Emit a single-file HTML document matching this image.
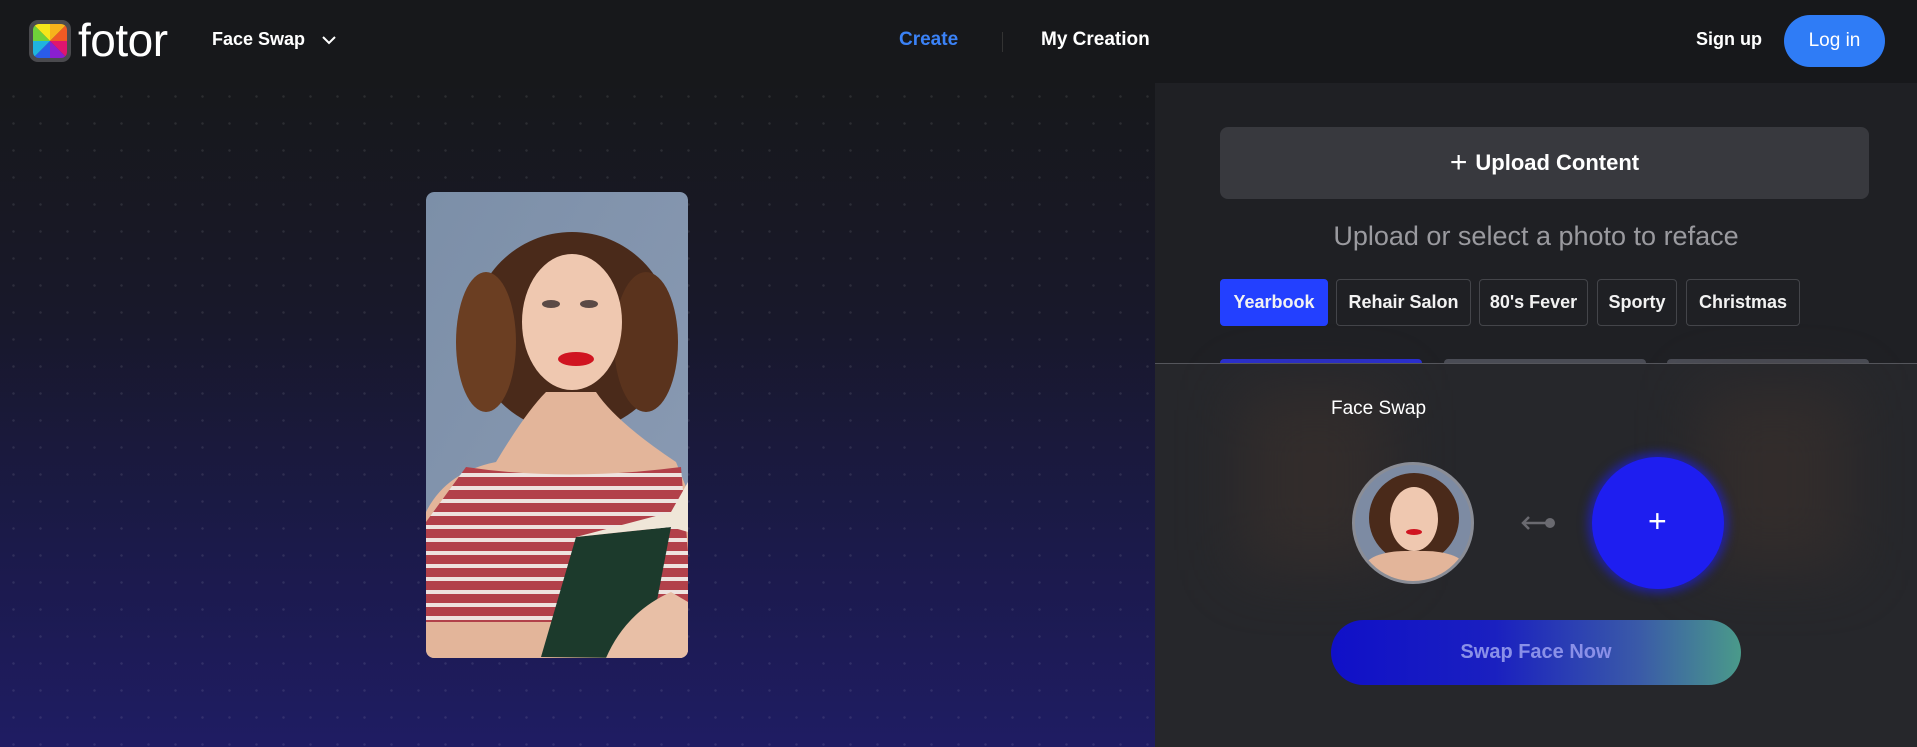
<!DOCTYPE html>
<html><head><meta charset="utf-8"><style>
*{margin:0;padding:0;box-sizing:border-box}
body{width:1917px;height:747px;overflow:hidden;background:#17181b;font-family:"Liberation Sans",sans-serif;position:relative;color:#fff}
.abs{position:absolute}
.hdr{left:0;top:0;width:1917px;height:83px;background:#17181b}
.left{left:0;top:83px;width:1155px;height:664px;background:linear-gradient(180deg,#17181b 0%,#18182a 35%,#1b1a4a 70%,#1f1c63 100%)}
.dots{left:0;top:83px;width:1155px;height:664px;background-image:radial-gradient(circle,rgba(255,255,255,.09) 1px,transparent 1.5px);background-size:27px 27px}
.right{left:1155px;top:83px;width:762px;height:664px;background:#1f2024}
.tag{position:absolute;top:279px;height:47px;border:1px solid #44454a;border-radius:4px;font-size:18px;font-weight:bold;display:flex;align-items:center;justify-content:center;color:#f2f2f2}
</style></head><body>
<div class="abs hdr"></div>
<svg class="abs" style="left:29px;top:20px" width="42" height="42" viewBox="0 0 42 42">
<rect x="0" y="0" width="42" height="42" rx="9" fill="#4a4a4e"/>
<defs><clipPath id="c"><rect x="4" y="4" width="34" height="34" rx="6"/></clipPath></defs>
<g clip-path="url(#c)">
<polygon points="21,21 4,4 21,4" fill="#f5e61a"/><polygon points="21,21 21,4 38,4" fill="#f7b21b"/>
<polygon points="21,21 38,4 38,21" fill="#f05a24"/><polygon points="21,21 38,21 38,38" fill="#e0156f"/>
<polygon points="21,21 38,38 21,38" fill="#8a1fd0"/><polygon points="21,21 21,38 4,38" fill="#2a5ce8"/>
<polygon points="21,21 4,38 4,21" fill="#1fb4e0"/><polygon points="21,21 4,21 4,4" fill="#6fd13a"/>
</g></svg>
<div class="abs" style="left:78px;top:13px;font-size:46px;color:#fff;letter-spacing:-0.5px">fotor</div>
<div class="abs" style="left:212px;top:29px;font-size:18px;font-weight:bold">Face Swap</div>
<svg class="abs" style="left:321px;top:34px" width="16" height="12" viewBox="0 0 16 12"><path d="M2 3 L8 9 L14 3" stroke="#fff" stroke-width="2" fill="none"/></svg>
<div class="abs" style="left:899px;top:29px;font-size:19px;font-weight:bold;color:#3b82f6">Create</div>
<div class="abs" style="left:1002px;top:32px;width:1px;height:20px;background:#333"></div>
<div class="abs" style="left:1041px;top:29px;font-size:19px;font-weight:bold">My Creation</div>
<div class="abs" style="left:1696px;top:29px;font-size:18px;font-weight:bold">Sign up</div>
<div class="abs" style="left:1784px;top:15px;width:101px;height:52px;border-radius:26px;background:#2f7cf6;font-size:19px;display:flex;align-items:center;justify-content:center">Log in</div>

<div class="abs left"></div><div class="abs dots"></div>

<svg class="abs" style="left:426px;top:192px;border-radius:8px" width="262" height="466" viewBox="0 0 262 466">
<defs><linearGradient id="bg" x1="0" y1="0" x2="1" y2="1"><stop offset="0" stop-color="#7c8fa8"/><stop offset="1" stop-color="#8b9bb4"/></linearGradient>
<pattern id="st" width="20" height="13" patternUnits="userSpaceOnUse"><rect width="20" height="13" fill="#b2414a"/><rect y="8" width="20" height="4" fill="#eee3df"/></pattern></defs>
<rect width="262" height="466" rx="8" fill="url(#bg)"/>
<ellipse cx="146" cy="140" rx="100" ry="100" fill="#4a2a1a"/>
<ellipse cx="60" cy="150" rx="30" ry="70" fill="#6b3e22"/>
<ellipse cx="220" cy="150" rx="32" ry="70" fill="#5a331d"/>
<path d="M70 270 Q100 220 120 200 L170 200 Q190 230 250 270 L262 300 L262 466 L0 466 L0 320 Q20 280 70 270Z" fill="#e3b59a"/>
<ellipse cx="146" cy="130" rx="50" ry="68" fill="#efc8b0"/>
<ellipse cx="125" cy="112" rx="9" ry="4" fill="#5a4a46"/><ellipse cx="163" cy="112" rx="9" ry="4" fill="#5a4a46"/>
<ellipse cx="150" cy="167" rx="18" ry="7" fill="#d01420"/>
<path d="M40 275 Q140 290 255 275 L262 360 L262 430 L0 430 L0 330 Z" fill="url(#st)"/>
<polygon points="115,465 150,345 245,335 225,440 200,466" fill="#1c3a2c"/>
<polygon points="150,345 245,320 262,290 262,340 245,335" fill="#efe6d8"/>
<path d="M180 466 Q200 420 245 400 L262 410 L262 466Z" fill="#e8bfa6"/>
</svg>

<div class="abs right"></div>
<div class="abs" style="left:1220px;top:127px;width:649px;height:72px;border-radius:8px;background:#38393e;display:flex;align-items:center;justify-content:center;font-size:22px;font-weight:bold"><span style="font-size:30px;font-weight:normal;margin-right:8px;margin-top:0px">+</span>Upload Content</div>
<div class="abs" style="left:1155px;width:762px;top:221px;text-align:center;font-size:27px;color:#9a9a9f">Upload or select a photo to reface</div>
<div class="tag" style="left:1220px;width:108px;background:#2340ff;border-color:#2340ff">Yearbook</div>
<div class="tag" style="left:1336px;width:135px">Rehair Salon</div>
<div class="tag" style="left:1479px;width:109px">80's Fever</div>
<div class="tag" style="left:1597px;width:80px">Sporty</div>
<div class="tag" style="left:1686px;width:114px">Christmas</div>
<div class="abs" style="left:1220px;top:359px;width:202px;height:8px;border-radius:4px 4px 0 0;background:#2a2fd0"></div>
<div class="abs" style="left:1444px;top:359px;width:202px;height:8px;border-radius:4px 4px 0 0;background:#4a4c55"></div>
<div class="abs" style="left:1667px;top:359px;width:202px;height:8px;border-radius:4px 4px 0 0;background:#4a4c55"></div>
<div class="abs" style="left:1155px;top:363px;width:762px;height:384px;background:#26272b"></div>
<div class="abs" style="left:1155px;top:363px;width:762px;height:1px;background:#55565c"></div>
<div class="abs" style="left:1240px;top:390px;width:150px;height:180px;background:#3a302c;filter:blur(30px);opacity:.6"></div>
<div class="abs" style="left:1700px;top:390px;width:150px;height:180px;background:#3a302c;filter:blur(30px);opacity:.6"></div>
<div class="abs" style="left:1331px;top:398px;font-size:19px">Face Swap</div>
<div class="abs" style="left:1352px;top:462px;width:122px;height:122px;border-radius:50%;background:#7d8ba3;border:3px solid #8a8d96;overflow:hidden">
<div style="position:absolute;left:14px;top:8px;width:90px;height:90px;border-radius:50%;background:#4a2a1a"></div>
<div style="position:absolute;left:35px;top:22px;width:48px;height:64px;border-radius:50%;background:#efc8b0"></div>
<div style="position:absolute;left:51px;top:64px;width:16px;height:6px;border-radius:50%;background:#d01420"></div>
<div style="position:absolute;left:10px;top:86px;width:100px;height:40px;border-radius:40% 40% 0 0;background:#e3b59a"></div>
</div>
<svg class="abs" style="left:1520px;top:513px" width="38" height="20" viewBox="0 0 38 20"><path d="M9 4 L3 10 L9 16 M3 10 L28 10" stroke="#6a6a70" stroke-width="2.5" fill="none"/><circle cx="30" cy="10" r="5" fill="#6a6a70"/></svg>
<div class="abs" style="left:1592px;top:457px;width:132px;height:132px;border-radius:50%;background:#1e1ef0;box-shadow:0 0 10px 4px rgba(30,30,240,.6)"></div>
<div class="abs" style="left:1648px;top:503px;font-size:32px;color:#fff">+</div>
<div class="abs" style="left:1331px;top:620px;width:410px;height:65px;border-radius:33px;background:linear-gradient(90deg,#1010c8 0%,#1a20c0 40%,#3a5aa8 75%,#4a9a8a 100%);display:flex;align-items:center;justify-content:center;font-size:20px;font-weight:bold;color:#8a90e8">Swap Face Now</div>
</body></html>
